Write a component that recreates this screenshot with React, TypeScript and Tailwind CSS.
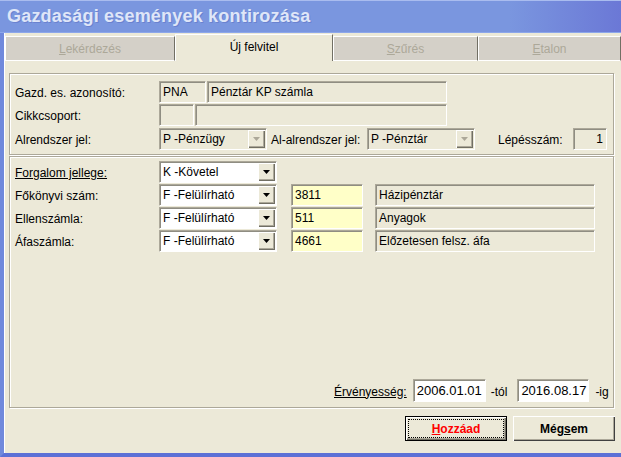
import React from 'react';

const sunken =
  'border border-t-[#aca899] border-l-[#aca899] border-r-white border-b-white shadow-[inset_1px_1px_0_#8f8d82]';

function Field({ className, children }: { className: string; children?: React.ReactNode }) {
  return (
    <div className={`${sunken} h-[22px] flex items-center px-[3px] whitespace-nowrap overflow-hidden ${className}`}>
      {children}
    </div>
  );
}

function Arrow({ disabled }: { disabled?: boolean }) {
  return (
    <div className="w-[17px] h-[18px] bg-[#ece9d8] flex items-center justify-center shadow-[inset_1px_1px_0_#fff,inset_-1px_-1px_0_#716f64,inset_-2px_-2px_0_#aca899]">
      <svg width="8" height="5" viewBox="0 0 8 5">
        <path d="M0 0h7l-3.5 4z" fill={disabled ? '#aca899' : '#000'} />
      </svg>
    </div>
  );
}

function Combo({ className, text, disabled }: { className: string; text: string; disabled?: boolean }) {
  return (
    <div
      className={`${sunken} h-[22px] flex items-center justify-between pl-[3px] pr-[1px] ${
        disabled ? 'bg-[#ece9d8]' : 'bg-white'
      } ${className}`}
    >
      <span className="whitespace-nowrap">{text}</span>
      <Arrow disabled={disabled} />
    </div>
  );
}

function Tab({ w, label, u }: { w: string; label: string; u: string }) {
  return (
    <div
      className={`${w} h-[25px] bg-[#d4d0c8] border-t border-l border-white border-r border-r-[#716f64] border-b border-b-white flex items-center justify-center text-[#aca899]`}
    >
      <span>
        <span className="underline">{u}</span>
        {label}
      </span>
    </div>
  );
}

export default function App() {
  return (
    <div className="w-[621px] h-[457px] overflow-hidden bg-[#ece9d8] flex flex-col font-['Liberation_Sans',Arial,sans-serif] text-[12px] text-black">
      <div className="h-[33px] shrink-0 border-t border-t-[#a9bcef] border-b border-b-[#8da7ea] bg-[linear-gradient(to_right,#7a96df_0%,#7a96df_82%,#6b78d6_100%)] flex items-center pl-[7px]">
        <span className="text-[18px] font-bold text-[#dfe6f8] [text-shadow:1px_1px_0_#6a82cf] tracking-[0.2px]">
          Gazdasági események kontirozása
        </span>
      </div>

      <div className="flex-1 flex border-l-4 border-l-[#7089dc] border-b-4 border-b-[#5c70d6]">
        <div className="flex-1 flex flex-col border-l border-white">
          {/* tabs */}
          <div className="h-[28px] flex items-end">
            <Tab w="w-[170px]" u="L" label="ekérdezés" />
            <div className="w-[158px] h-[27px] bg-[#ece9d8] border-t border-l border-white border-r border-r-[#716f64] flex items-center justify-center pb-[2px]">
              Új felvitel
            </div>
            <Tab w="w-[145px]" u="S" label="zűrés" />
            <Tab w="flex-1" u="E" label="talon" />
          </div>

          {/* group 1 */}
          <div className="ml-[4px] mt-[12px] w-[605px] h-[82px] border border-[#aca899] shadow-[1px_1px_0_#fff,inset_1px_1px_0_#fff] pl-[5px] pt-[7px] flex flex-col">
            <div className="flex items-center h-[22px]">
              <div className="w-[144px] pt-[2px]">Gazd. es. azonosító:</div>
              <Field className="w-[47px]">PNA</Field>
              <Field className="ml-[1px] w-[240px]">Pénztár KP számla</Field>
            </div>
            <div className="flex items-center h-[22px] mt-[1px]">
              <div className="w-[144px] pt-[2px]">Cikkcsoport:</div>
              <Field className="w-[35px]" />
              <Field className="ml-[1px] w-[252px]" />
            </div>
            <div className="flex items-center h-[22px] mt-[2px]">
              <div className="w-[144px] pt-[2px]">Alrendszer jel:</div>
              <Combo className="w-[108px]" text="P -Pénzügy" disabled />
              <div className="ml-[4px] w-[96px] pt-[2px] whitespace-nowrap">Al-alrendszer jel:</div>
              <Combo className="w-[108px]" text="P -Pénztár" disabled />
              <div className="ml-[23px] w-[75px] pt-[2px]">Lépésszám:</div>
              <Field className="w-[34px] justify-end">1</Field>
            </div>
          </div>

          {/* group 2 */}
          <div className="ml-[4px] mt-[1px] w-[605px] h-[252px] border border-[#aca899] shadow-[1px_1px_0_#fff,inset_1px_1px_0_#fff] pl-[5px] pt-[4px] pb-[5px] flex flex-col">
            <div className="flex items-center h-[22px]">
              <div className="w-[144px] pt-[2px]">
                <span className="underline">Forgalom jellege:</span>
              </div>
              <Combo className="w-[118px]" text="K -Követel" />
            </div>
            {[
              ['Főkönyvi szám:', '3811', 'Házipénztár'],
              ['Ellenszámla:', '511', 'Anyagok'],
              ['Áfaszámla:', '4661', 'Előzetesen felsz. áfa'],
            ].map(([label, num, name]) => (
              <div key={label} className="flex items-center h-[22px] mt-[1px]">
                <div className="w-[144px] pt-[2px]">{label}</div>
                <Combo className="w-[118px]" text="F -Felülírható" />
                <Field className="ml-[14px] w-[72px] bg-[#ffffc8]">{num}</Field>
                <Field className="ml-[12px] w-[220px]">{name}</Field>
              </div>
            ))}

            <div className="mt-auto flex items-center h-[23px] pl-[319px]">
              <span className="underline pt-[2px]">Érvényesség:</span>
              <Field className="ml-[6px] w-[73px] h-[23px] bg-white text-[13px]">2006.01.01</Field>
              <span className="ml-[5px] pt-[2px]">-tól</span>
              <Field className="ml-[10px] w-[72px] h-[23px] bg-white text-[13px]">2016.08.17</Field>
              <span className="ml-[6px] pt-[2px]">-ig</span>
            </div>
          </div>

          {/* buttons */}
          <div className="flex mt-[8px] ml-[400px]">
            <button className="w-[102px] h-[25px] border border-black bg-[#ece9d8] shadow-[inset_1px_1px_0_#fff,inset_-1px_-1px_0_#716f64,inset_-2px_-2px_0_#aca899] outline-1 outline-dotted outline-black -outline-offset-4 font-bold text-[#ff0000]">
              <span className="underline">H</span>ozzáad
            </button>
            <button className="ml-[6px] w-[102px] h-[25px] bg-[#ece9d8] shadow-[inset_1px_1px_0_#fff,inset_-1px_-1px_0_#404040,inset_-2px_-2px_0_#aca899] font-bold">
              Még<span className="underline">s</span>em
            </button>
          </div>
        </div>
      </div>
    </div>
  );
}
